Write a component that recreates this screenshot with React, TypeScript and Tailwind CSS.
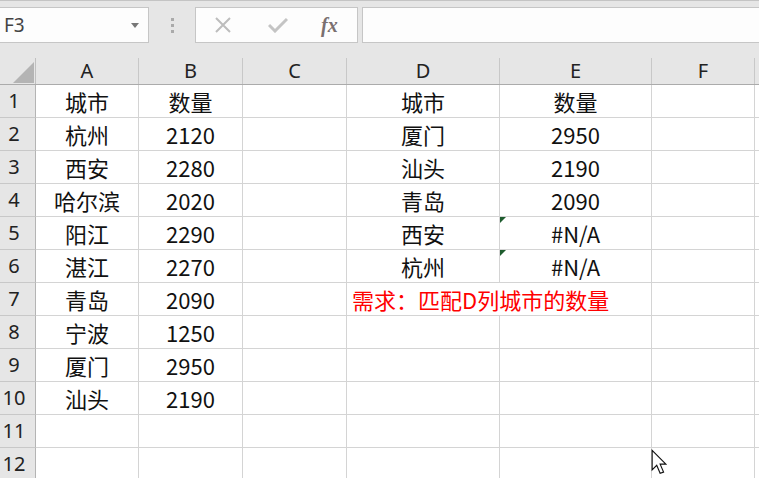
import React from 'react';

const cols = [
  { key: 'A', w: 'w-[103px]' },
  { key: 'B', w: 'w-[104px]' },
  { key: 'C', w: 'w-[104px]' },
  { key: 'D', w: 'w-[153px]' },
  { key: 'E', w: 'w-[152px]' },
  { key: 'F', w: 'w-[103px]' },
  { key: 'G', w: 'w-[60px]' },
];

const colA = ['城市', '杭州', '西安', '哈尔滨', '阳江', '湛江', '青岛', '宁波', '厦门', '汕头'];
const colB = ['数量', '2120', '2280', '2020', '2290', '2270', '2090', '1250', '2950', '2190'];
const colD = ['城市', '厦门', '汕头', '青岛', '西安', '杭州'];
const colE = ['数量', '2950', '2190', '2090', '#N/A', '#N/A'];

const cellValue = (col: string, row: number) => {
  if (col === 'A') return colA[row - 1];
  if (col === 'B') return colB[row - 1];
  if (col === 'D') return colD[row - 1];
  if (col === 'E') return colE[row - 1];
  return undefined;
};

const Row: React.FC<{ n: number }> = ({ n }) => (
  <div className="flex h-[33px] shrink-0">
    <div className="w-[36px] shrink-0 border-r border-b border-r-[#b4b4b4] border-b-[#c8c8c8] bg-[#e6e6e6] flex items-center">
      <span className="w-[28px] text-center text-[20px] text-[#222] font-['Noto_Sans',sans-serif]">{n}</span>
    </div>
    {cols.map((c) => {
      const v = cellValue(c.key, n);
      const isNote = n === 7 && c.key === 'D';
      const errorMark = c.key === 'E' && (n === 5 || n === 6);
      return (
        <div
          key={c.key}
          className={`${c.w} shrink-0 relative border-b border-[#d4d4d4] flex items-center ${isNote ? 'z-10' : 'border-r justify-center'}`}
        >
          {errorMark && (
            <span className="absolute left-0 top-0 w-0 h-0 border-t-[6px] border-r-[6px] border-t-[#1e5c2e] border-r-transparent" />
          )}
          {isNote && (
            <span className="pl-[5px] whitespace-nowrap text-[22px] text-[#ff0000]">需求：匹配D列城市的数量</span>
          )}
          {v && !isNote && <span className="text-[22px] text-[#111]">{v}</span>}
        </div>
      );
    })}
  </div>
);

const App: React.FC = () => {
  return (
    <div className="w-[759px] h-[478px] overflow-hidden bg-[#e6e6e6] relative font-['Noto_Sans_CJK_SC',sans-serif] flex flex-col">
      {/* formula bar */}
      <div className="h-[58px] shrink-0 border-t border-[#c4c4c4] flex items-start pt-[6px]">
        <div className="w-[149px] h-[36px] bg-[#fdfdfd] border border-l-0 border-[#c6c6c6] flex items-center justify-between pl-[4px] pr-[9px]">
          <span className="text-[19px] text-[#444] font-['Noto_Sans',sans-serif]">F3</span>
          <span className="w-0 h-0 border-l-[4px] border-r-[4px] border-t-[5px] border-l-transparent border-r-transparent border-t-[#777]" />
        </div>
        <div className="w-[46px] h-[36px] flex flex-col items-center justify-center gap-[3px]">
          <span className="w-[3px] h-[3px] bg-[#aaa]" />
          <span className="w-[3px] h-[3px] bg-[#aaa]" />
          <span className="w-[3px] h-[3px] bg-[#aaa]" />
        </div>
        <div className="w-[163px] h-[36px] bg-[#fdfdfd] border border-[#c6c6c6] flex items-center pl-[17px]">
          <svg width="20" height="16" viewBox="0 0 20 16">
            <path d="M3 1 L17 15 M17 1 L3 15" stroke="#bdbdbd" strokeWidth="2" fill="none" />
          </svg>
          <svg width="20" height="16" viewBox="0 0 20 16" className="ml-[35px]">
            <path d="M1 8 L7 14 L19 2" stroke="#c4c4c4" strokeWidth="3" fill="none" />
          </svg>
          <span className="ml-[33px] text-[20px] italic font-bold text-[#7a7070] font-['Liberation_Serif',serif] leading-none">fx</span>
        </div>
        <div className="ml-[4px] flex-1 h-[36px] bg-[#fdfdfd] border border-r-0 border-[#c6c6c6]" />
      </div>

      {/* column headers */}
      <div className="flex h-[27px] shrink-0 border-b border-[#ababab]">
        <div className="w-[36px] shrink-0 border-r border-[#c0c0c0] relative">
          <svg width="21" height="21" viewBox="0 0 21 21" className="absolute left-[13px] top-[4px]">
            <polygon points="21,0 21,21 0,21" fill="#b4b4b4" />
          </svg>
        </div>
        {cols.map((c) => (
          <div
            key={c.key}
            className={`${c.w} shrink-0 border-r border-[#c8c8c8] flex items-center justify-center text-[20px] text-[#222] font-['Noto_Sans',sans-serif]`}
          >
            {c.key === 'G' ? '' : c.key}
          </div>
        ))}
      </div>

      {/* sheet */}
      <div className="bg-white flex flex-col">
        {Array.from({ length: 12 }, (_, i) => (
          <Row key={i} n={i + 1} />
        ))}
      </div>

      {/* mouse pointer */}
      <svg width="16" height="28" viewBox="0 0 14 24" className="absolute left-[651px] top-[449px] z-20">
        <path d="M1 1 L1 18 L5 14 L8 21 L11 20 L8 13 L13 13 Z" fill="#fff" stroke="#111" strokeWidth="1" strokeLinejoin="miter" />
      </svg>
    </div>
  );
};

export default App;
